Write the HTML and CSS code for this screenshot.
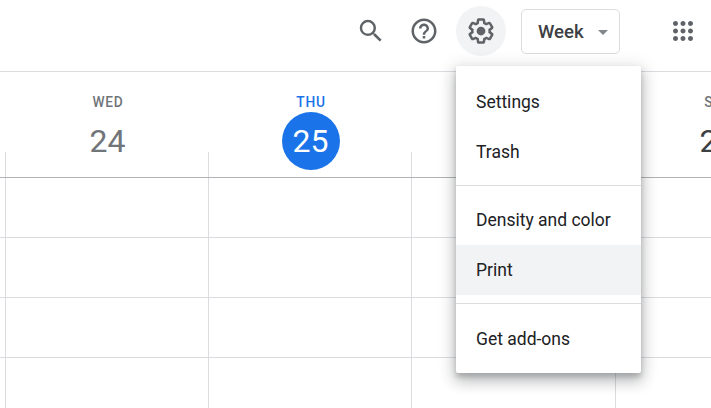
FILE: index.html
```html
<!DOCTYPE html>
<html lang="en">
<head>
<meta charset="utf-8">
<title>Calendar</title>
<link rel="stylesheet" href="styles.css">
</head>
<body>
<div class="app">
  <header class="topbar">
    <button class="icon-btn"><svg viewBox="0 0 24 24" class="icon"><path d="M15.5 14h-.79l-.28-.27A6.47 6.47 0 0 0 16 9.5 6.5 6.5 0 1 0 9.5 16c1.61 0 3.09-.59 4.23-1.57l.27.28v.79l5 4.99L20.49 19l-4.99-5zm-6 0C7.01 14 5 11.99 5 9.5S7.01 5 9.5 5 14 7.01 14 9.5 11.99 14 9.5 14z"/></svg></button>
    <button class="icon-btn"><svg viewBox="0 0 24 24" class="icon"><path d="M11 18h2v-2h-2v2zm1-16C6.48 2 2 6.48 2 12s4.48 10 10 10 10-4.48 10-10S17.52 2 12 2zm0 18c-4.41 0-8-3.59-8-8s3.59-8 8-8 8 3.59 8 8-3.59 8-8 8zm0-14c-2.21 0-4 1.79-4 4h2c0-1.1.9-2 2-2s2 .9 2 2c0 2-3 1.75-3 5h2c0-2.25 3-2.5 3-5 0-2.21-1.79-4-4-4z"/></svg></button>
    <button class="icon-btn active"><svg viewBox="0 0 24 24" class="icon"><path d="M13.85 22.25h-3.7c-.74 0-1.36-.54-1.45-1.27l-.27-1.89c-.27-.14-.53-.29-.79-.46l-1.8.72c-.7.26-1.47-.03-1.81-.65L2.2 15.53c-.35-.66-.2-1.44.36-1.88l1.53-1.19c-.01-.15-.02-.3-.02-.46s.01-.31.02-.46l-1.52-1.19c-.59-.45-.74-1.26-.37-1.88l1.85-3.19c.34-.62 1.11-.9 1.79-.63l1.81.73c.26-.17.52-.32.78-.46l.27-1.91c.09-.7.71-1.25 1.44-1.25h3.7c.74 0 1.36.54 1.45 1.27l.27 1.89c.27.14.53.29.79.46l1.8-.72c.71-.26 1.48.03 1.82.65l1.84 3.18c.36.66.2 1.44-.36 1.88l-1.52 1.19c.01.15.02.3.02.46s-.01.31-.02.46l1.52 1.19c.56.45.72 1.23.37 1.86l-1.86 3.22c-.34.62-1.11.9-1.8.63l-1.8-.72c-.26.17-.52.32-.78.46l-.27 1.91c-.1.68-.72 1.22-1.46 1.22zm-3.23-2h2.76l.37-2.55.53-.22c.44-.18.88-.44 1.34-.78l.45-.34 2.38.96 1.38-2.4-2.03-1.58.07-.56c.03-.26.06-.51.06-.78s-.03-.53-.06-.78l-.07-.56 2.03-1.58-1.39-2.4-2.39.96-.45-.35c-.42-.32-.87-.58-1.33-.77l-.52-.22-.37-2.55h-2.76l-.37 2.55-.53.21c-.44.19-.88.44-1.34.79l-.45.33-2.38-.95-1.39 2.39 2.03 1.58-.07.56a7 7 0 0 0-.06.79c0 .26.02.53.06.78l.07.56-2.03 1.58 1.38 2.4 2.39-.96.45.35c.43.33.86.58 1.33.77l.53.22.38 2.55z"/><circle cx="12" cy="12" r="3.5"/></svg></button>
    <button class="view-select"><span>Week</span><i class="caret"></i></button>
    <button class="icon-btn apps"><svg viewBox="0 0 24 24" class="icon"><path d="M6 8c1.1 0 2-.9 2-2s-.9-2-2-2-2 .9-2 2 .9 2 2 2zm6 12c1.1 0 2-.9 2-2s-.9-2-2-2-2 .9-2 2 .9 2 2 2zm-6 0c1.1 0 2-.9 2-2s-.9-2-2-2-2 .9-2 2 .9 2 2 2zm0-6c1.1 0 2-.9 2-2s-.9-2-2-2-2 .9-2 2 .9 2 2 2zm6 0c1.1 0 2-.9 2-2s-.9-2-2-2-2 .9-2 2 .9 2 2 2zm4-8c0 1.1.9 2 2 2s2-.9 2-2-.9-2-2-2-2 .9-2 2zm-4 2c1.1 0 2-.9 2-2s-.9-2-2-2-2 .9-2 2 .9 2 2 2zm6 6c1.1 0 2-.9 2-2s-.9-2-2-2-2 .9-2 2 .9 2 2 2zm0 6c1.1 0 2-.9 2-2s-.9-2-2-2-2 .9-2 2 .9 2 2 2z"/></svg></button>
  </header>

  <section class="week">
    <div class="days">
      <div class="gutter"></div>
      <div class="day"><span class="dow">WED</span><span class="num">24</span></div>
      <div class="day today"><span class="dow">THU</span><span class="num">25</span></div>
      <div class="day"></div>
      <div class="day dark"><span class="dow">SAT</span><span class="num">27</span></div>
    </div>
    <div class="grid">
      <div class="slot"></div>
      <div class="slot"></div>
      <div class="slot"></div>
      <div class="slot"></div>
    </div>
  </section>

  <nav class="menu">
    <div class="item low">Settings</div>
    <div class="item low">Trash</div>
    <hr class="rule rule-a">
    <div class="item">Density and color</div>
    <div class="item hover">Print</div>
    <hr class="rule rule-b">
    <div class="item low">Get add-ons</div>
  </nav>
</div>
</body>
</html>
```
FILE: styles.css
```css
* { box-sizing: border-box; }
html, body { margin: 0; height: 100%; background: #fff; overflow: hidden; }
body { font-family: Roboto, "Liberation Sans", sans-serif; }
.app { position: relative; width: 711px; height: 408px; overflow: hidden; }

.topbar {
  height: 72px;
  border-bottom: 1px solid #dadce0;
  display: flex;
  align-items: flex-start;
  padding: 6px 0 0 346px;
}
.topbar button { background: none; border: 0; padding: 0; font: inherit; }
.icon-btn {
  width: 50px;
  height: 50px;
  margin-right: 3px;
  border-radius: 50%;
  display: flex;
  align-items: center;
  justify-content: center;
  flex: none;
}
.topbar .icon-btn.active { background: #f1f3f4; margin-left: 4px; margin-right: 0; }
.icon { width: 30px; height: 30px; fill: #5f6368; display: block; }
.topbar .view-select {
  width: 99px;
  height: 45px;
  margin: 3px 0 0 15px;
  padding: 0 11px 0 16px;
  border: 1px solid #dadce0;
  border-radius: 5px;
  display: flex;
  align-items: center;
  justify-content: space-between;
  color: #3c4043;
  font-size: 18.6px;
  font-weight: 500;
}
.caret {
  width: 0;
  height: 0;
  border-left: 5px solid transparent;
  border-right: 5px solid transparent;
  border-top: 5.5px solid #80868b;
  margin-top: 2px;
}
.icon-btn.apps { margin: 0 0 0 38px; }

.days {
  height: 106px;
  display: grid;
  grid-template-columns: 5px 203px 203px 204px 203px;
  border-bottom: 1px solid #b0b2b5;
}
.day {
  position: relative;
  display: flex;
  flex-direction: column;
  align-items: center;
  padding-left: 3px;
}
.day::before {
  content: "";
  position: absolute;
  left: 0;
  top: 80px;
  bottom: 0;
  width: 1px;
  background: #dadce0;
}
.dow {
  margin-top: 22px;
  height: 16px;
  line-height: 16px;
  font-size: 13.75px;
  font-weight: 500;
  letter-spacing: 0.8px;
  color: #70757a;
}
.num {
  width: 58px;
  height: 58px;
  margin-top: 2px;
  border-radius: 50%;
  line-height: 58px;
  text-align: center;
  text-indent: -1px;
  font-size: 32px;
  color: #70757a;
}
.today .dow { color: #1a73e8; }
.today .num { background: #1a73e8; color: #fff; }
.dark .num { color: #3c4043; }

.slot {
  height: 60px;
  border-bottom: 1px solid #dadce0;
  background: linear-gradient(#dadce0, #dadce0) 5px 0 / 1px 100% no-repeat,
    linear-gradient(#dadce0, #dadce0) 208px 0 / 1px 100% no-repeat,
    linear-gradient(#dadce0, #dadce0) 411px 0 / 1px 100% no-repeat,
    linear-gradient(#dadce0, #dadce0) 615px 0 / 1px 100% no-repeat;
}

.menu {
  position: absolute;
  left: 456px;
  top: 66px;
  width: 185px;
  padding: 10px 0;
  background: #fff;
  border-radius: 2px;
  box-shadow: 0 9px 14px 1px rgba(60, 64, 67, .2), 0 3px 16px 3px rgba(60, 64, 67, .16), 0 4px 5px rgba(60, 64, 67, .24);
}
.item {
  height: 50px;
  line-height: 50px;
  padding-left: 20px;
  font-size: 17.5px;
  color: #202124;
}
.item.low { line-height: 52px; }
.item.hover { background: #f1f3f4; }
.rule { height: 1px; margin: 0; border: 0; background: #dadce0; }
.rule-a { margin: 9px 0; }
.rule-b { margin: 8px 0 9px; }
```
